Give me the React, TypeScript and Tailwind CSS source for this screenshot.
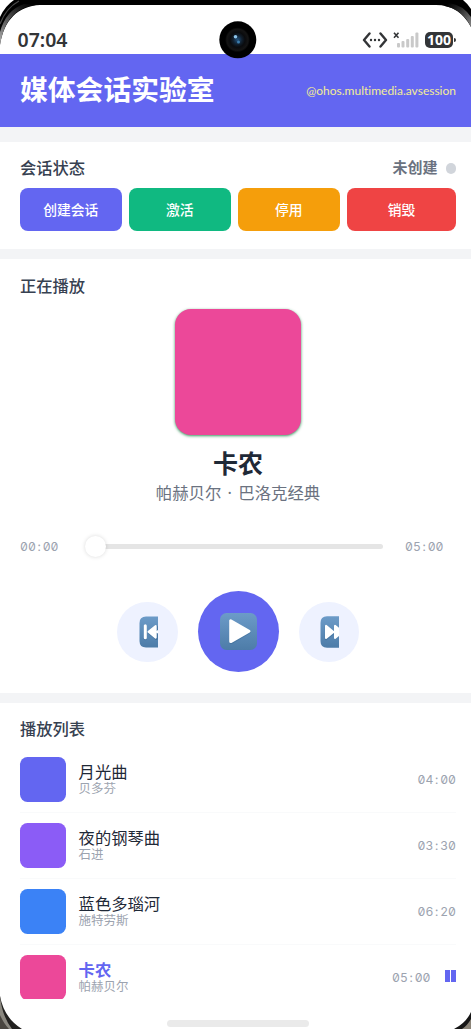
import React from 'react';

interface Track {
  title: string;
  artist: string;
  duration: string;
  cover: string;
  active?: boolean;
}

const tracks: Track[] = [
  { title: '月光曲', artist: '贝多芬', duration: '04:00', cover: 'bg-[#6366f1]' },
  { title: '夜的钢琴曲', artist: '石进', duration: '03:30', cover: 'bg-[#8b5cf6]' },
  { title: '蓝色多瑙河', artist: '施特劳斯', duration: '06:20', cover: 'bg-[#3b82f6]' },
  { title: '卡农', artist: '帕赫贝尔', duration: '05:00', cover: 'bg-[#ec4899]', active: true },
];

const actions = [
  { label: '创建会话', style: 'bg-[#6366f1] w-[101.5px]' },
  { label: '激活', style: 'bg-[#10b981] w-[101.5px]' },
  { label: '停用', style: 'bg-[#f59e0b] w-[101.5px]' },
  { label: '销毁', style: 'bg-[#ef4444] flex-1' },
];

// Digits are tabular; the colon gets side margins so it takes a full cell too
const Time: React.FC<{ value: string; className?: string }> = ({ value, className = '' }) => {
  const [minutes, seconds] = value.split(':');
  return (
    <span className={`font-['Inter',sans-serif] text-[12.2px] leading-4 text-[#9ca3af] [font-feature-settings:'zero','tnum'] ${className}`}>
      {minutes}<span className="mx-[1.8px]">:</span>{seconds}
    </span>
  );
};

const SectionTitle: React.FC<{ children: React.ReactNode }> = ({ children }) => (
  <h2 className="text-[16.3px] leading-6 font-medium text-[#374151]">{children}</h2>
);

const EmojiGradient: React.FC<{ id: string }> = ({ id }) => (
  <defs>
    <linearGradient id={id} x1="0" y1="0" x2="0" y2="1">
      <stop offset="0" stopColor="#6c9bc8" />
      <stop offset="1" stopColor="#4d7ca8" />
    </linearGradient>
  </defs>
);

// The glyph boxes are narrower than the emoji, so the right half is cut off
const PrevIcon = () => (
  <svg width="19" height="32" viewBox="0 0 19 32" className="relative left-[0.8px]">
    <EmojiGradient id="prev" />
    <path d="M19 0.5H7Q0.5 0.5 0.5 7V25Q0.5 31.5 7 31.5H19Z" fill="url(#prev)" />
    <path d="M6.3 10V22.7M17.5 11L10.5 16.6L17.5 22.5Z" stroke="#2e5b86" strokeOpacity=".4" strokeWidth="3" strokeLinejoin="round" strokeLinecap="round" fill="none" />
    <path d="M6.3 9.8V21.8" stroke="#fff" strokeWidth="3" strokeLinecap="round" />
    <path d="M16.7 10L9.5 15.8L16.7 21.6Z" stroke="#fff" strokeWidth="2" strokeLinejoin="round" fill="#fff" />
    <path d="M16 16L19 14V17.6Z" fill="#fff" />
  </svg>
);

const PlayIcon = () => (
  <svg width="37" height="37" viewBox="0 0 37 37">
    <EmojiGradient id="play" />
    <rect width="37" height="37" rx="6.5" fill="url(#play)" />
    <path d="M11 9V29.6L29.3 19Z" stroke="#2e5b86" strokeOpacity=".35" strokeWidth="3" strokeLinejoin="round" fill="none" />
    <path d="M10.7 7.8V28.6L29 18.2Z" stroke="#fff" strokeWidth="3" strokeLinejoin="round" fill="#fff" />
  </svg>
);

const NextIcon = () => (
  <svg width="19" height="32" viewBox="0 0 19 32" className="relative left-[0.8px]">
    <EmojiGradient id="next" />
    <path d="M19 0.3H7Q0.5 0.3 0.5 7V25Q0.5 31.7 7 31.7H19Z" fill="url(#next)" />
    <path d="M6 10.5V23L14 16.8Z" stroke="#2e5b86" strokeOpacity=".35" strokeWidth="2.5" strokeLinejoin="round" fill="none" />
    <path d="M6 9.8V22L13.5 16Z M15 9.8V22L22.5 16Z" stroke="#fff" strokeWidth="2" strokeLinejoin="round" fill="#fff" />
  </svg>
);

const StatusBar = () => (
  <div className="flex h-[49px] items-end justify-between bg-white pr-[15px] pb-[6px] pl-[17.5px] text-[#333537]">
    <span className="font-['Noto_Sans',sans-serif] text-[19.5px] leading-4 font-semibold">07:04</span>
    <div className="flex items-center">
      <svg width="26" height="16" viewBox="0 0 26 16" fill="none" stroke="#333537" strokeWidth="2.4" strokeLinecap="round" strokeLinejoin="round">
        <path d="M7.5 1.5L2 8L7.5 14.5M18.5 1.5L24 8L18.5 14.5" />
        <path d="M9 8H9.01M13 8H13.01M17 8H17.01" strokeWidth="2.4" />
      </svg>
      <svg width="27" height="16" viewBox="0 0 27 16" className="ml-[5px]">
        <path d="M1 .8L5.5 5.8M5.5 .8L1 5.8" stroke="#333537" strokeWidth="1.6" />
        <g fill="#c9c9c9">
          <rect x="4" y="11" width="3" height="4.5" rx="1" />
          <rect x="8.5" y="9" width="3" height="6.5" rx="1" />
          <rect x="13.2" y="7" width="3" height="8.5" rx="1" />
          <rect x="17.8" y="4" width="3" height="11.5" rx="1" />
          <rect x="22.4" y="0.5" width="3" height="15" rx="1" />
        </g>
      </svg>
      <span className="ml-[5px] flex h-[15.5px] w-[28px] items-center justify-center rounded-[5px] bg-[#333537] font-['Noto_Sans',sans-serif] text-[14px] leading-none font-bold text-white">100</span>
      <span className="ml-[1px] h-[4px] w-[2px] rounded-r-full bg-[#333537]" />
    </div>
  </div>
);

const PhoneFrame = () => (
  <svg width="471" height="1029" viewBox="0 0 471 1029" className="pointer-events-none absolute inset-0">
    <defs>
      <linearGradient id="rimLeft" gradientUnits="userSpaceOnUse" x1="0" y1="45" x2="34" y2="4">
        <stop offset="0" stopColor="#b5b5b5" />
        <stop offset=".35" stopColor="#6a6a6a" />
        <stop offset=".8" stopColor="#161616" />
        <stop offset="1" stopColor="#000" />
      </linearGradient>
      <linearGradient id="rimRight" gradientUnits="userSpaceOnUse" x1="471" y1="27" x2="448" y2="3">
        <stop offset="0" stopColor="#8a8a8a" />
        <stop offset=".6" stopColor="#2a2a2a" />
        <stop offset="1" stopColor="#000" />
      </linearGradient>
      <radialGradient id="lens">
        <stop offset="0" stopColor="#235480" />
        <stop offset=".35" stopColor="#11202f" />
        <stop offset=".6" stopColor="#0a0b0d" />
        <stop offset=".85" stopColor="#141414" />
        <stop offset="1" stopColor="#000" />
      </radialGradient>
    </defs>
    <path d="M14 0H463V5H40C18 6 4 20 0 45V17Q5 6 14 0Z" fill="#000" />
    <path d="M36 5C16 7 4 20 0 45V32Q6 10 24 4Z" fill="url(#rimLeft)" />
    <path d="M0 24Q6 8 19 1" stroke="#4a4a4a" strokeWidth="1.2" fill="none" />
    <path d="M430 5H463V0Q468 4 471 9V27Q459 5 436 5Z" fill="#000" />
    <path d="M445 6Q463 10 471 27V17Q463 5 449 3Z" fill="url(#rimRight)" />
    <path d="M0 996Q4 1018 22 1029H0Z" fill="#22211f" />
    <path d="M0 996Q2 1016 12 1029H0Z" fill="#8b8880" />
    <path d="M0 1015Q4 1024 9 1029H0Z" fill="#4a4640" />
    <path d="M471 1012Q466 1023 454 1029H471Z" fill="#161616" />
    <path d="M471 1019Q467 1026 462 1029H471Z" fill="#8b8478" />
    <circle cx="237.8" cy="39.8" r="18.5" fill="#000" />
    <circle cx="237.5" cy="39.8" r="12.5" fill="url(#lens)" />
    <circle cx="235.5" cy="36.7" r="1.8" fill="#8cc4ea" />
    <circle cx="238.5" cy="42" r="1.5" fill="#3c7eae" />
  </svg>
);

const App: React.FC = () => (
  <div className="relative flex h-[1029px] w-[471px] flex-col overflow-hidden bg-white pt-[5px] font-['Noto_Sans_CJK_SC',sans-serif]">
    <StatusBar />

    <header className="flex h-[72.7px] shrink-0 items-center justify-between bg-[#6366f1] pr-[15px] pl-[20px]">
      <h1 className="pb-[3px] text-[27.8px] leading-none font-bold text-white">媒体会话实验室</h1>
      <span className="pt-px font-['Lato',sans-serif] text-[12px] leading-4 text-[#f3ec96] [font-variant-ligatures:none]">@ohos.multimedia.avsession</span>
    </header>

    <main className="flex h-[872px] shrink-0 flex-col overflow-hidden bg-[#f3f4f6] pt-[15.3px]">
      <section className="h-[107.3px] shrink-0 bg-white pt-[13.5px] pr-[15px] pl-[20px]">
        <div className="flex h-6 items-center justify-between">
          <SectionTitle>会话状态</SectionTitle>
          <div className="flex items-center gap-2">
            <span className="text-[15px] leading-6 font-bold text-[#6b7280]">未创建</span>
            <span className="mt-[2px] size-[10.5px] rounded-full bg-[#d1d5db]" />
          </div>
        </div>
        <div className="mt-[9px] flex gap-[7.5px]">
          {actions.map(action => (
            <button key={action.label} className={`h-[43px] rounded-[8px] pb-[1.5px] text-[13.8px] font-medium text-white ${action.style}`}>
              {action.label}
            </button>
          ))}
        </div>
      </section>

      <section className="mt-[10px] h-[433.7px] shrink-0 bg-white pt-[14px] pr-[15px] pl-[20px]">
        <SectionTitle>正在播放</SectionTitle>
        <div className="flex flex-col items-center pt-[11.5px]">
          <div className="size-[126px] rounded-[16px] bg-[#ec4899] shadow-[0_1px_3px_#047a35cc]" />
          <h3 className="mt-[11.5px] text-[25px] leading-8 font-bold text-[#1f2937]">卡农</h3>
          <p className="mt-[2px] text-[16.4px] leading-6 text-[#6b7280]">
            帕赫贝尔<span className="mx-[2px] font-['Noto_Sans',sans-serif]"> · </span>巴洛克经典
          </p>
        </div>
        <div className="mt-[30.5px] flex h-[22px] items-center">
          <Time value="00:00" className="w-[65px]" />
          <div className="flex flex-1 items-center">
            <span className="z-10 size-[21px] shrink-0 rounded-full bg-white shadow-[0_0_4px_#00000026]" />
            <span className="-ml-2 h-[5px] w-[285px] rounded-full bg-[#e5e5e5]" />
          </div>
          <Time value="05:00" className="mr-[12.5px]" />
        </div>
        <div className="mt-[33.5px] flex items-center justify-center gap-[20px]">
          <button className="flex size-[60.5px] items-center justify-center rounded-full bg-[#eef2ff]"><PrevIcon /></button>
          <button className="flex size-[81px] items-center justify-center rounded-full bg-[#6366f1]"><PlayIcon /></button>
          <button className="flex size-[60.5px] items-center justify-center rounded-full bg-[#eef2ff]"><NextIcon /></button>
        </div>
      </section>

      <section className="mt-[10px] shrink-0 bg-white pt-[13.4px] pr-[15px] pl-[20px]">
        <SectionTitle>播放列表</SectionTitle>
        <ul className="mt-[6.7px]">
          {tracks.map(track => (
            <li key={track.title} className="flex h-[66px] items-center border-b border-[#f9fafb]">
              <span className={`size-[45.6px] shrink-0 rounded-[7.5px] ${track.cover}`} />
              <div className="mb-[1.5px] ml-[13px] flex-1">
                <p className={`text-[16.3px] leading-[18px] ${track.active ? 'font-bold text-[#6366f1]' : 'text-[#1f2937]'}`}>{track.title}</p>
                <p className="text-[12.5px] leading-4 text-[#9ca3af]">{track.artist}</p>
              </div>
              <Time value={track.duration} className="pt-px" />
              {track.active && (
                <span className="mb-[3.5px] ml-[14.5px] flex gap-px">
                  <span className="h-[12px] w-[5px] bg-[#6366f1]" />
                  <span className="h-[12px] w-[5px] bg-[#6366f1]" />
                </span>
              )}
            </li>
          ))}
        </ul>
      </section>
    </main>

    <div className="mt-[21px] ml-[167px] h-[7px] w-[141.5px] shrink-0 rounded-full bg-[#eaeaea]" />
    <PhoneFrame />
  </div>
);

export default App;
